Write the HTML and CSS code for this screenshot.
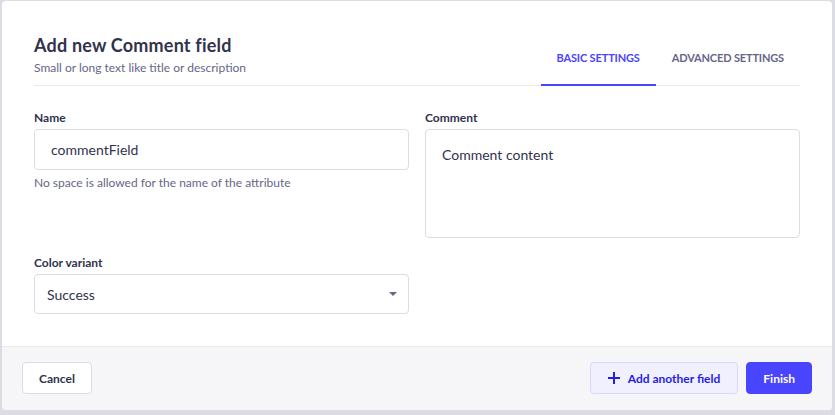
FILE: index.html
```html
<!DOCTYPE html>
<html>
<head>
<meta charset="utf-8">
<link rel="stylesheet" href="styles.css">
</head>
<body>
<div class="overlay">
  <div class="modal">
    <div class="header">
      <div class="titles">
        <h2 class="title">Add new Comment field</h2>
        <p class="subtitle">Small or long text like title or description</p>
      </div>
      <div class="tabs">
        <div class="tab active">BASIC SETTINGS</div>
        <div class="tab">ADVANCED SETTINGS</div>
      </div>
    </div>
    <div class="body">
      <div class="grid">
        <div class="field">
          <label class="label">Name</label>
          <div class="input">commentField</div>
          <p class="hint">No space is allowed for the name of the attribute</p>
        </div>
        <div class="field">
          <label class="label">Comment</label>
          <div class="textarea">Comment content</div>
        </div>
        <div class="field">
          <label class="label">Color variant</label>
          <div class="select">
            <span>Success</span>
            <svg class="caret" width="8" height="4" viewBox="0 0 8 4"><path d="M0 0h8L4 4z" fill="#666687"/></svg>
          </div>
        </div>
      </div>
    </div>
    <div class="footer">
      <button class="btn btn-tertiary">Cancel</button>
      <div class="footer-right">
        <button class="btn btn-secondary">
          <svg width="12" height="12" viewBox="0 0 12 12"><path d="M6 0v12M0 6h12" stroke="#271fe0" stroke-width="2"/></svg>
          <span>Add another field</span>
        </button>
        <button class="btn btn-primary">Finish</button>
      </div>
    </div>
  </div>
</div>
</body>
</html>
```

FILE: styles.css
```css
* { box-sizing: border-box; }
html, body {
  margin: 0;
  padding: 0;
  width: 835px;
  height: 415px;
  overflow: hidden;
  background: #dcdce4;
  font-family: "Lato", "Noto Sans", sans-serif;
  color: #32324d;
}
.overlay {
  padding: 1px 0 0 2px;
}
.modal {
  width: 830px;
  height: 409px;
  background: #ffffff;
  border-radius: 4px;
  display: flex;
  flex-direction: column;
  overflow: hidden;
}
.header {
  margin: 0 32px;
  padding-top: 32px;
  display: flex;
  justify-content: space-between;
  align-items: flex-end;
  border-bottom: 1px solid #eaeaef;
}
.titles {
  padding-bottom: 9px;
}
.title {
  margin: 0;
  font-size: 18px;
  line-height: 24px;
  font-weight: 700;
  color: #32324d;
  letter-spacing: 0.2px;
}
.subtitle {
  margin: 3px 0 0;
  font-size: 12px;
  line-height: 16px;
  color: #666687;
}
.tabs {
  display: flex;
  margin-bottom: -1px;
}
.tab {
  padding: 0 16px 18px;
  font-size: 11px;
  line-height: 16px;
  font-weight: 700;
  color: #666687;
  letter-spacing: -0.15px;
  border-bottom: 2px solid transparent;
}
.tab.active {
  color: #4945ff;
  border-bottom-color: #4945ff;
}
.body {
  flex: 1;
  padding: 24px 32px 0;
}
.grid {
  display: grid;
  grid-template-columns: 375px 375px;
  column-gap: 16px;
  row-gap: 17px;
}
.field {
  display: flex;
  flex-direction: column;
}
.label {
  font-size: 12px;
  line-height: 16px;
  font-weight: 700;
  color: #32324d;
  margin-bottom: 3px;
}
.input, .textarea, .select {
  border: 1px solid #dcdce4;
  border-radius: 4px;
  font-size: 14px;
  color: #32324d;
  background: #fff;
}
.input {
  height: 41px;
  padding: 0 16px;
  display: flex;
  align-items: center;
}
.textarea {
  height: 109px;
  padding: 15px 16px;
  line-height: 20px;
}
.hint {
  margin: 5px 0 0;
  font-size: 12px;
  line-height: 16px;
  color: #666687;
}
.select {
  height: 40px;
  padding: 0 12px;
  display: flex;
  align-items: center;
  justify-content: space-between;
}
.caret {
  margin-right: -1px;
}
.footer {
  height: 64px;
  background: #f6f6f9;
  border-top: 1px solid #eaeaef;
  padding: 0 20px 1px;
  display: flex;
  align-items: center;
  justify-content: space-between;
}
.footer-right {
  display: flex;
  gap: 8px;
}
.btn {
  height: 32px;
  padding: 0 16px;
  border-radius: 4px;
  font-family: inherit;
  font-size: 12px;
  font-weight: 700;
  display: flex;
  align-items: center;
  gap: 8px;
  cursor: pointer;
}
.btn-tertiary {
  background: #ffffff;
  border: 1px solid #dcdce4;
  color: #32324d;
}
.btn-secondary {
  background: #f0f0ff;
  border: 1px solid #d9d8ff;
  color: #271fe0;
  padding: 0 17px;
}
.btn-primary {
  background: #4945ff;
  border: 1px solid #4945ff;
  color: #ffffff;
}
```
